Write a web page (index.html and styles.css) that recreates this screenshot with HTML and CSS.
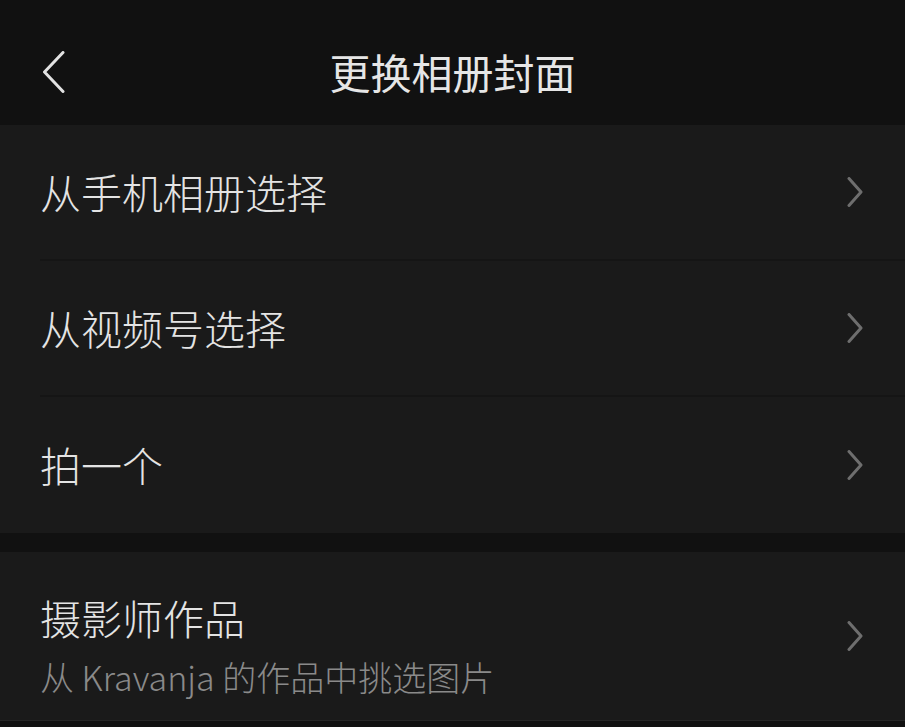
FILE: index.html
```html
<!DOCTYPE html>
<html lang="zh-CN">
<head>
    <meta charset="UTF-8">
    <meta name="viewport" content="width=device-width, initial-scale=1.0">
    <title>更换相册封面</title>
    <link rel="stylesheet" href="styles.css">
</head>
<body>

    <header class="nav">
        <button class="back" aria-label="返回">
            <svg width="23" height="42" viewBox="0 0 23 42">
                <path d="M21 1.5 L2.5 21 L21 40.5" fill="none" stroke="#e2e2e2" stroke-width="3" stroke-linecap="round" stroke-linejoin="round"/>
            </svg>
        </button>
        <h1 class="nav-title">更换相册封面</h1>
        <span></span>
    </header>

    <!-- 封面来源 -->
    <section class="group">
        <a class="row" href="#">
            <div class="row-inner">
                <span class="row-title">从手机相册选择</span>
                <svg class="arrow" width="16" height="30" viewBox="0 0 16 30"><path d="M2 1.5 L14 15 L2 28.5"/></svg>
            </div>
        </a>
        <a class="row" href="#">
            <div class="row-inner">
                <span class="row-title">从视频号选择</span>
                <svg class="arrow" width="16" height="30" viewBox="0 0 16 30"><path d="M2 1.5 L14 15 L2 28.5"/></svg>
            </div>
        </a>
        <a class="row" href="#">
            <div class="row-inner last">
                <span class="row-title">拍一个</span>
                <svg class="arrow" width="16" height="30" viewBox="0 0 16 30"><path d="M2 1.5 L14 15 L2 28.5"/></svg>
            </div>
        </a>
    </section>

    <!-- 摄影师作品 -->
    <section class="group bottom">
        <a class="row" href="#">
            <div class="row-inner tall last">
                <div class="row-text">
                    <span class="row-title">摄影师作品</span>
                    <span class="row-sub">从 Kravanja 的作品中挑选图片</span>
                </div>
                <svg class="arrow" width="16" height="30" viewBox="0 0 16 30"><path d="M2 1.5 L14 15 L2 28.5"/></svg>
            </div>
        </a>
    </section>

</body>
</html>
```

FILE: styles.css
```css
* {
    margin: 0;
    padding: 0;
    box-sizing: border-box;
}

body {
    font-family: "Noto Sans CJK SC", "Noto Sans", sans-serif;
    background-color: #111111;
    color: #e4e4e4;
    width: 905px;
    height: 727px;
    overflow: hidden;
}

.nav {
    height: 125px;
    padding-top: 18px;
    display: grid;
    grid-template-columns: 1fr auto 1fr;
    align-items: center;
    background-color: #111111;
}

.back {
    justify-self: start;
    margin-left: 42px;
    background: none;
    border: none;
    display: flex;
    cursor: pointer;
}

.nav-title {
    font-size: 41px;
    font-weight: 400;
    line-height: 1.2;
    color: #e6e6e6;
}

.group {
    background-color: #1a1a1a;
}

.group.bottom {
    margin-top: 19px;
    border-bottom: 1px solid #262626;
}

.row {
    display: block;
    padding-left: 40px;
    color: inherit;
    text-decoration: none;
}

.row-inner {
    height: 136px;
    padding-right: 42px;
    display: flex;
    align-items: center;
    justify-content: space-between;
    border-bottom: 2px solid #151515;
}

.row-inner.last {
    border-bottom: none;
}

.row-inner.tall {
    height: 168px;
}

.row-title {
    font-size: 41px;
    font-weight: 300;
    line-height: 1.2;
    color: #e4e4e4;
}

.row-text {
    display: flex;
    flex-direction: column;
    padding-top: 20px;
}

.row-sub {
    margin-top: 12px;
    font-size: 34px;
    font-weight: 300;
    line-height: 1.3;
    color: #8a8a8a;
}

.arrow path {
    fill: none;
    stroke: #6e6e6e;
    stroke-width: 3;
    stroke-linecap: round;
    stroke-linejoin: round;
}
```
